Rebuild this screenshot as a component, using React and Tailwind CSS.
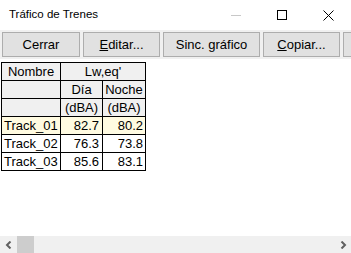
import React from "react";

const ROWS = [
  { name: "Track_01", dia: "82.7", noche: "80.2", hi: true },
  { name: "Track_02", dia: "76.3", noche: "73.8" },
  { name: "Track_03", dia: "85.6", noche: "83.1" },
];

const Btn = ({ className = "", children }) => (
  <button className={`h-[25px] bg-[#e1e1e1] border border-[#adadad] text-[13px] text-black leading-none flex items-center justify-center ${className}`}>
    {children}
  </button>
);

const Cell = ({ className = "", children }) => (
  <div className={`bg-[#f0f0f0] flex items-center justify-center ${className}`}>{children}</div>
);

export default function App() {
  return (
    <div className="w-[351px] h-[253px] bg-white flex flex-col overflow-hidden" style={{ fontFamily: '"Liberation Sans", Arial, sans-serif' }}>
      {/* title bar */}
      <div className="h-[30px] flex items-center shrink-0 bg-white">
        <span className="pl-[9px] text-[11.5px] text-black">Tráfico de Trenes</span>
        <div className="ml-auto flex items-center h-full">
          <div className="w-[46px] h-full flex items-center justify-center">
            <div className="w-[10px] h-px bg-[#c8c8c8]"></div>
          </div>
          <div className="w-[46px] h-full flex items-center justify-center">
            <div className="w-[10px] h-[10px] border border-black"></div>
          </div>
          <div className="w-[46px] h-full flex items-center justify-center">
            <svg width="11" height="11" viewBox="0 0 11 11">
              <path d="M0.5 0.5 L10.5 10.5 M10.5 0.5 L0.5 10.5" stroke="#000" strokeWidth="1" />
            </svg>
          </div>
        </div>
      </div>

      {/* toolbar */}
      <div className="h-[29px] shrink-0 bg-[#f0f0f0] flex items-start pt-[2px] pl-[2px] gap-[3px]">
        <Btn className="w-[78px] shrink-0">Cerrar</Btn>
        <Btn className="w-[77px] shrink-0"><span><span className="underline">E</span>ditar...</span></Btn>
        <Btn className="w-[97px] shrink-0"><span>Sinc. <span className="underline">g</span>ráfico</span></Btn>
        <Btn className="w-[77px] shrink-0"><span><span className="underline">C</span>opiar...</span></Btn>
        <Btn className="w-[40px] shrink-0"></Btn>
      </div>

      {/* body */}
      <div className="flex-1 bg-white relative">
        <div className="ml-px inline-grid grid-cols-[58px_41px_42px] auto-rows-[17px] gap-px p-px bg-black text-[13px] text-black leading-none">
          <Cell>Nombre</Cell>
          <Cell className="col-span-2">Lw,eq'</Cell>
          <Cell></Cell>
          <Cell>Día</Cell>
          <Cell>Noche</Cell>
          <Cell></Cell>
          <Cell>(dBA)</Cell>
          <Cell>(dBA)</Cell>
          {ROWS.map((r) => (
            <React.Fragment key={r.name}>
              <div className={`${r.hi ? "bg-[#fffbe1]" : "bg-white"} flex items-center pl-[2px]`}>{r.name}</div>
              <div className={`${r.hi ? "bg-[#fffbe1]" : "bg-white"} flex items-center justify-end pr-[3px]`}>{r.dia}</div>
              <div className={`${r.hi ? "bg-[#fffbe1]" : "bg-white"} flex items-center justify-end pr-[2px]`}>{r.noche}</div>
            </React.Fragment>
          ))}
        </div>
      </div>

      {/* horizontal scrollbar */}
      <div className="h-[17px] shrink-0 bg-[#f0f0f0] flex items-center">
        <div className="w-[17px] h-full flex items-center justify-center">
          <svg width="8" height="8" viewBox="0 0 8 8">
            <path d="M5.5 0.5 L2 4 L5.5 7.5" stroke="#606060" strokeWidth="2" fill="none" />
          </svg>
        </div>
        <div className="w-[17px] h-full bg-[#cdcdcd]"></div>
        <div className="flex-1"></div>
        <div className="w-[17px] h-full flex items-center justify-center">
          <svg width="8" height="8" viewBox="0 0 8 8">
            <path d="M2.5 0.5 L6 4 L2.5 7.5" stroke="#606060" strokeWidth="2" fill="none" />
          </svg>
        </div>
      </div>
    </div>
  );
}
